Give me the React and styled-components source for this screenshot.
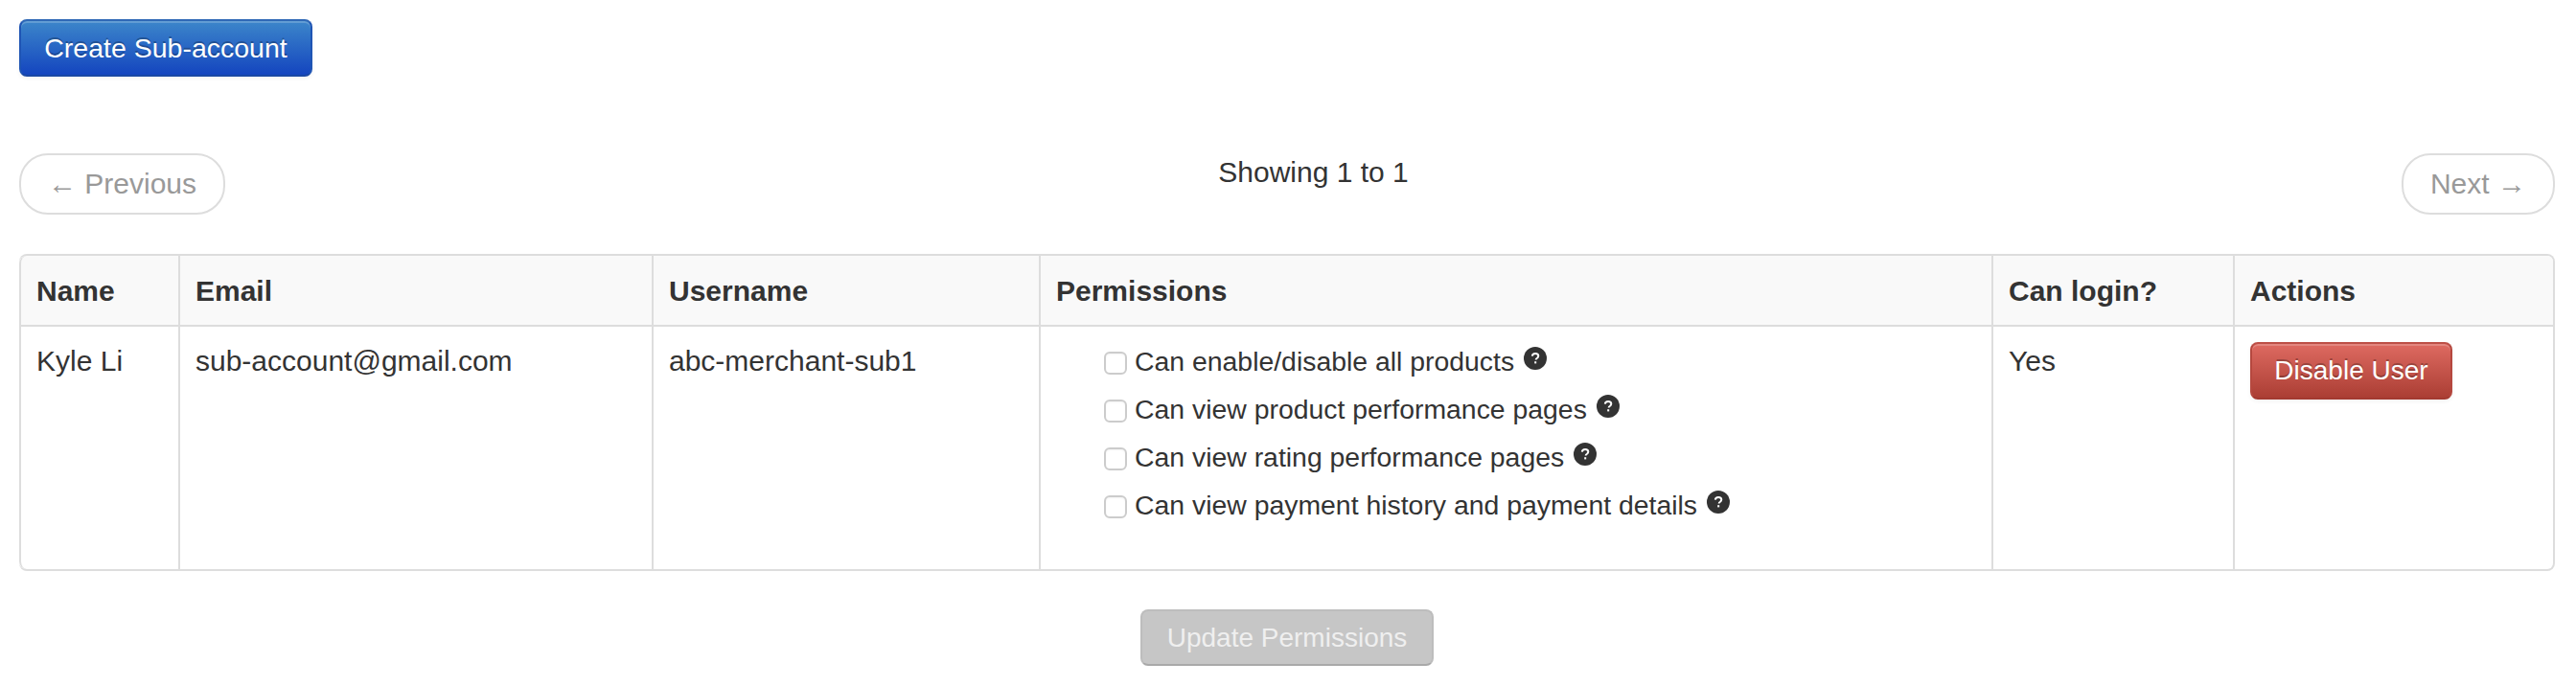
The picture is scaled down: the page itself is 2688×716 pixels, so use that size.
import styled, { createGlobalStyle } from "styled-components";

const permissions = [
  "Can enable/disable all products",
  "Can view product performance pages",
  "Can view rating performance pages",
  "Can view payment history and payment details",
];

const columns = [
  { label: "Name", width: 166 },
  { label: "Email", width: 494 },
  { label: "Username", width: 404 },
  { label: "Permissions", width: 994 },
  { label: "Can login?", width: 252 },
  { label: "Actions", width: 334 },
];

const HelpIcon = () => (
  <HelpSvg viewBox="0 0 24 24">
    <circle cx="12" cy="12" r="12" fill="#333" />
    <path
      d="M8.8 9.6c.2-1.8 1.5-2.7 3.3-2.7 1.900 0 3.200 1 3.200 2.600 0 1.300-.7 1.900-1.600 2.500-.8.500-1 .8-1 1.600"
      fill="none"
      stroke="#fff"
      strokeWidth="2"
    />
    <rect x="11.2" y="15.200" width="2" height="2.200" fill="#fff" />
  </HelpSvg>
);

const App = () => {
  return (
    <Page>
      <GlobalStyle />
      <CreateButton>Create Sub-account</CreateButton>

      <Pager>
        <PagerLink>← Previous</PagerLink>
        <PagerInfo>Showing 1 to 1</PagerInfo>
        <PagerLink>Next →</PagerLink>
      </Pager>

      <Table>
        <colgroup>
          {columns.map((col) => (
            <col key={col.label} width={col.width} />
          ))}
        </colgroup>
        <thead>
          <tr>
            {columns.map((col) => (
              <Th key={col.label}>{col.label}</Th>
            ))}
          </tr>
        </thead>
        <tbody>
          <tr>
            <Td>Kyle Li</Td>
            <Td>sub-account@gmail.com</Td>
            <Td>abc-merchant-sub1</Td>
            <Td>
              <PermissionList>
                {permissions.map((text) => (
                  <PermissionItem key={text}>
                    <Checkbox type="checkbox" />
                    <span>{text}</span>
                    <HelpIcon />
                  </PermissionItem>
                ))}
              </PermissionList>
            </Td>
            <Td>Yes</Td>
            <Td>
              <DisableButton>Disable User</DisableButton>
            </Td>
          </tr>
        </tbody>
      </Table>

      <Footer>
        <UpdateButton disabled>Update Permissions</UpdateButton>
      </Footer>
    </Page>
  );
};

export default App;

const GlobalStyle = createGlobalStyle`
html, body {
  margin: 0;
  background: #fff;
}
body {
  font-family: "Liberation Sans", Arial, sans-serif;
  font-size: 30px;
  line-height: 40px;
  color: #333;
}
`;

const Page = styled.div`
width: 2688px;
box-sizing: border-box;
padding: 20px 22px 0 20px;
`;

const Button = styled.button`
display: block;
box-sizing: border-box;
height: 60px;
padding: 8px 0;
border-radius: 8px;
border: 2px solid;
font-family: inherit;
font-size: 28px;
line-height: 40px;
white-space: nowrap;
color: #fff;
`;

const CreateButton = styled(Button)`
width: 306px;
margin-bottom: 80px;
font-size: 28.5px;
background: linear-gradient(#3c86ca, #1445bf);
border-color: #2f68b6 #1f55b4 #1a48a4;
box-shadow: inset 0 2px 0 rgba(255, 255, 255, 0.2), 0 2px 4px rgba(0, 0, 0, 0.05);
text-shadow: 0 -2px 0 rgba(0, 0, 0, 0.25);
`;

const Pager = styled.div`
display: flex;
justify-content: space-between;
align-items: flex-start;
margin-bottom: 41px;
`;

const PagerLink = styled.span`
box-sizing: border-box;
height: 64px;
padding: 10px 28px;
border: 2px solid #ddd;
border-radius: 30px;
background: #fff;
color: #999;
white-space: nowrap;
`;

const PagerInfo = styled.span`
color: #333;
`;

const Table = styled.table`
width: 2646px;
table-layout: fixed;
border-collapse: separate;
border-spacing: 0;
border: 2px solid #ddd;
border-left: 0;
border-radius: 8px;
`;

const Th = styled.th`
padding: 17px 16px 15px;
border-left: 2px solid #ddd;
background: #f9f9f9;
font-weight: bold;
text-align: left;
vertical-align: top;

&:first-child {
  border-top-left-radius: 8px;
}
&:last-child {
  border-top-right-radius: 6px;
}
`;

const Td = styled.td`
padding: 16px;
border-left: 2px solid #ddd;
border-top: 2px solid #ddd;
vertical-align: top;

&:first-child {
  border-bottom-left-radius: 8px;
}
`;

const PermissionList = styled.ul`
list-style: none;
margin: 0 0 0 50px;
padding: 0 0 21px;
`;

const PermissionItem = styled.li`
display: flex;
align-items: center;
height: 40px;
margin-bottom: 10px;
font-size: 28.4px;
white-space: nowrap;
`;

const Checkbox = styled.input`
appearance: none;
box-sizing: border-box;
flex: none;
width: 24px;
height: 24px;
margin: 4px 8px 0 0;
border: 2px solid #ccc;
border-radius: 6px;
background: #fff;
box-shadow: inset 0 1px 2px rgba(0, 0, 0, 0.05);
`;

const HelpSvg = styled.svg`
flex: none;
width: 24px;
height: 24px;
margin: -6px 0 0 10px;
`;

const DisableButton = styled(Button)`
width: 211px;
background: linear-gradient(#de6a61, #ab3e34);
border-color: #bd4f46 #b5483f #a33a31;
box-shadow: inset 0 2px 0 rgba(255, 255, 255, 0.2), 0 2px 4px rgba(0, 0, 0, 0.05);
text-shadow: 0 -2px 0 rgba(0, 0, 0, 0.25);
`;

const Footer = styled.div`
display: flex;
justify-content: center;
margin-top: 40px;
`;

const UpdateButton = styled(Button)`
width: 306px;
height: 59px;
background: #c6c6c6;
border-color: #bdbdbd #bdbdbd #a9a9a9;
color: #efefef;
`;
